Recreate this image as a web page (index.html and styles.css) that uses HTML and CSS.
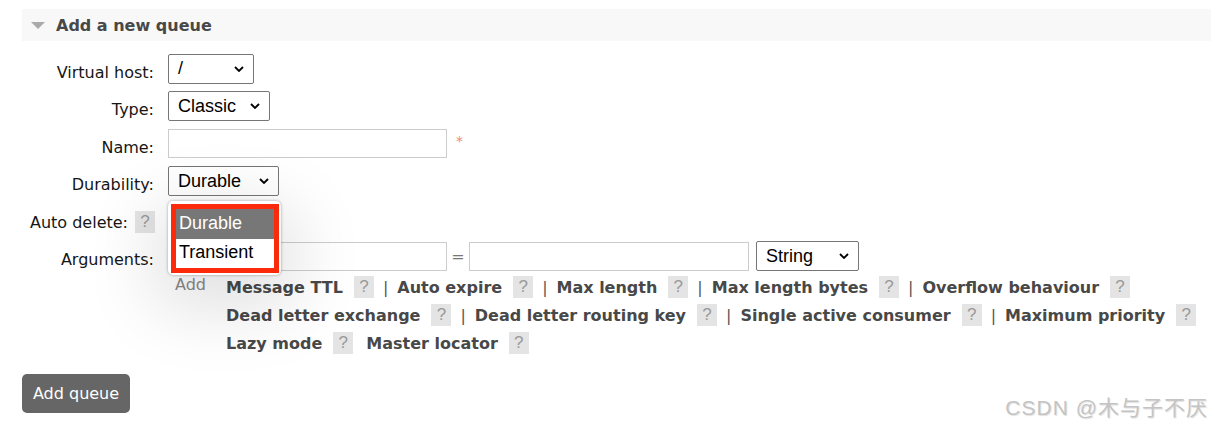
FILE: index.html
```html
<!DOCTYPE html>
<html>
<head>
<meta charset="utf-8">
<link rel="stylesheet" href="styles.css">
</head>
<body>
<div class="page">
  <div class="section-head"><span class="tri"></span><h2>Add a new queue</h2></div>
  <div class="form">
    <div class="row">
      <div class="lbl">Virtual host:</div>
      <div class="sel w-vhost"><span>/</span><svg class="chev" width="10" height="6" viewBox="0 0 10 6"><path d="M1 1l4 4 4-4" fill="none" stroke="#000" stroke-width="1.8"/></svg></div>
    </div>
    <div class="row">
      <div class="lbl">Type:</div>
      <div class="sel w-type"><span>Classic</span><svg class="chev" width="10" height="6" viewBox="0 0 10 6"><path d="M1 1l4 4 4-4" fill="none" stroke="#000" stroke-width="1.8"/></svg></div>
    </div>
    <div class="row">
      <div class="lbl">Name:</div>
      <div class="inp w-name"></div>
      <span class="req">*</span>
    </div>
    <div class="row">
      <div class="lbl">Durability:</div>
      <div class="sel w-dur"><span>Durable</span><svg class="chev" width="10" height="6" viewBox="0 0 10 6"><path d="M1 1l4 4 4-4" fill="none" stroke="#000" stroke-width="1.8"/></svg></div>
    </div>
    <div class="row">
      <div class="lbl lbl-help">Auto delete: <span class="help">?</span></div>
      <div class="ctl">
        <div class="sel w-auto"><span></span></div>
        <div class="popup">
          <div class="mark">
            <div class="opt opt-sel">Durable</div>
            <div class="opt">Transient</div>
          </div>
        </div>
      </div>
    </div>
    <div class="row">
      <div class="lbl">Arguments:</div>
      <div class="inp w-arg1"></div>
      <span class="eq">=</span>
      <div class="inp w-arg2"></div>
      <div class="sel w-str"><span>String</span><svg class="chev" width="10" height="6" viewBox="0 0 10 6"><path d="M1 1l4 4 4-4" fill="none" stroke="#000" stroke-width="1.8"/></svg></div>
    </div>
  </div>
  <div class="extras">
    <div class="add">Add</div>
    <div class="links">
      <div class="hl-line">
        <span class="lk">Message TTL</span><span class="help">?</span><span class="sep">|</span>
        <span class="lk">Auto expire</span><span class="help">?</span><span class="sep">|</span>
        <span class="lk">Max length</span><span class="help">?</span><span class="sep">|</span>
        <span class="lk">Max length bytes</span><span class="help">?</span><span class="sep">|</span>
        <span class="lk">Overflow behaviour</span><span class="help">?</span>
      </div>
      <div class="hl-line">
        <span class="lk">Dead letter exchange</span><span class="help">?</span><span class="sep">|</span>
        <span class="lk">Dead letter routing key</span><span class="help">?</span><span class="sep">|</span>
        <span class="lk">Single active consumer</span><span class="help">?</span><span class="sep">|</span>
        <span class="lk">Maximum priority</span><span class="help">?</span>
      </div>
      <div class="hl-line">
        <span class="lk">Lazy mode</span><span class="help">?</span>
        <span class="lk lk-next">Master locator</span><span class="help">?</span>
      </div>
    </div>
  </div>
  <button class="btn">Add queue</button>
  <div class="watermark">CSDN @木与子不厌</div>
</div>
</body>
</html>
```

FILE: styles.css
```css
html, body {
  margin: 0;
  padding: 0;
  background: #fff;
}
body {
  font-family: "DejaVu Sans", Verdana, sans-serif;
  color: #161616;
  overflow: hidden;
}
.page {
  position: relative;
  height: 427px;
  box-sizing: border-box;
  padding: 9px 0 0 22px;
}
.section-head {
  height: 32px;
  background: #f8f8f8;
  display: flex;
  align-items: center;
  padding-left: 9px;
}
.tri {
  width: 0;
  height: 0;
  border-left: 7px solid transparent;
  border-right: 7px solid transparent;
  border-top: 7px solid #aaa;
  margin-right: 11px;
}
.section-head h2 {
  margin: 0;
  font-size: 16px;
  font-weight: bold;
  color: #484848;
}
.form {
  display: flex;
  flex-direction: column;
  gap: 8px;
  margin-top: 13px;
}
.row {
  display: flex;
  align-items: center;
  height: 29.5px;
}
.lbl {
  width: 146px;
  box-sizing: border-box;
  padding-right: 14px;
  margin-top: 7px;
  text-align: right;
  font-size: 16px;
  display: flex;
  justify-content: flex-end;
  align-items: center;
}
.lbl-help {
  padding-right: 13px;
}
.lbl-help .help {
  margin-left: 7px;
}
.sel {
  box-sizing: border-box;
  height: 30px;
  border: 1px solid #767676;
  border-radius: 2px;
  background: #fff;
  display: flex;
  align-items: center;
  justify-content: space-between;
  padding: 0 9px 0 9px;
  font-family: "Liberation Sans", Arial, sans-serif;
  font-size: 18px;
  color: #000;
}
.chev {
  flex: none;
}
.w-vhost { width: 86px; }
.w-type { width: 102px; }
.w-dur { width: 111px; }
.w-auto { width: 110px; }
.w-str { width: 103px; margin-left: 7px; }
.inp {
  box-sizing: border-box;
  height: 29px;
  border: 1px solid #ccc;
  background: #fff;
}
.w-name { width: 279px; }
.w-arg1 { width: 279px; }
.w-arg2 { width: 280px; }
.req {
  margin-left: 9px;
  color: #f08a70;
  font-size: 14px;
  margin-top: -6px;
}
.eq {
  width: 22px;
  text-align: center;
  color: #777;
  font-size: 16px;
}
.ctl {
  position: relative;
}
.popup {
  position: absolute;
  left: 0;
  top: -3px;
  width: 113px;
  height: 74px;
  box-sizing: border-box;
  background: #fff;
  border-radius: 5px;
  box-shadow: 0 0 3px rgba(0, 0, 0, 0.35), 0 20px 70px 14px rgba(0, 0, 0, 0.12);
  z-index: 2;
}
.mark {
  position: absolute;
  left: 3px;
  top: 3px;
  width: 108px;
  height: 69px;
  box-sizing: border-box;
  border: 5px solid #fa2a0a;
  display: flex;
  flex-direction: column;
}
.opt {
  height: 28px;
  display: flex;
  align-items: center;
  padding-left: 3px;
  font-family: "Liberation Sans", Arial, sans-serif;
  font-size: 18px;
  color: #000;
  background: #fff;
}
.opt-sel {
  height: 30px;
  background: #777;
  color: #fff;
}
.extras {
  display: flex;
  margin-left: 153px;
  margin-top: 2px;
}
.add {
  width: 51px;
  color: #888;
  font-size: 16px;
  line-height: 24px;
}
.hl-line {
  display: flex;
  align-items: center;
  height: 28px;
}
.lk {
  font-weight: bold;
  color: #484848;
  font-size: 16px;
  white-space: nowrap;
}
.lk-next {
  margin-left: 13px;
}
.help {
  width: 20px;
  height: 22px;
  background: #e4e4e4;
  color: #999;
  display: inline-flex;
  align-items: center;
  justify-content: center;
  font-family: "Liberation Sans", Arial, sans-serif;
  font-size: 17px;
  flex: none;
}
.lk + .help {
  margin-left: 11px;
}
.sep {
  margin: 0 9px;
  color: #555;
  font-size: 16px;
}
.btn {
  display: block;
  margin-top: 17px;
  width: 108px;
  height: 39px;
  border: none;
  border-radius: 5px;
  background: #666;
  color: #fff;
  font-family: "DejaVu Sans", Verdana, sans-serif;
  font-size: 16px;
  padding: 0;
}
.watermark {
  position: absolute;
  right: 3px;
  top: 396px;
  line-height: 24px;
  font-family: "Liberation Sans", "Noto Sans CJK SC", sans-serif;
  font-size: 21px;
  letter-spacing: 1px;
  color: #c4c4c4;
  text-shadow: 1px 1px 1px rgba(0, 0, 0, 0.12);
}
```
